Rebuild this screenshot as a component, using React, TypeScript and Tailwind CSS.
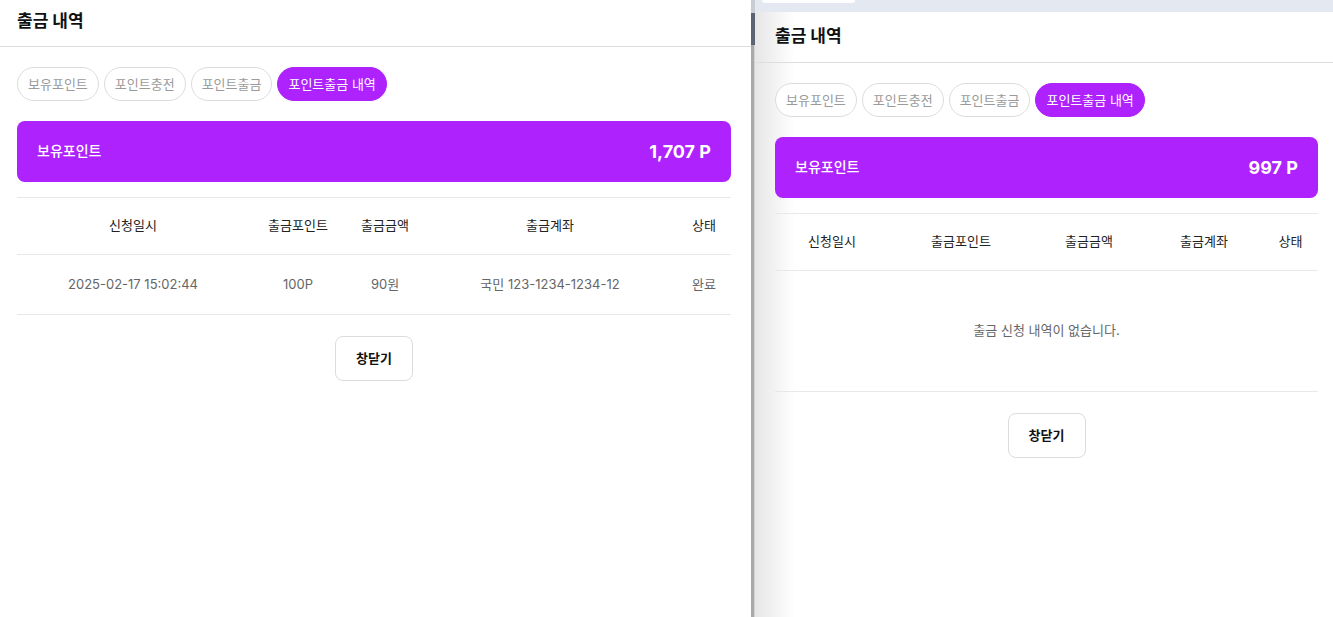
import React from "react";

const FONT = { fontFamily: "Inter, 'Noto Sans CJK KR', 'Noto Sans', sans-serif" };

const TABS = ["보유포인트", "포인트충전", "포인트출금", "포인트출금 내역"];

type Row = { date: string; point: string; amount: string; account: string; status: string };

function Tabs() {
  return (
    <div className="flex gap-[5px]">
      {TABS.map((t, i) => (
        <button
          key={t}
          className={
            i === 3
              ? "h-[34px] px-[10px] rounded-full border border-[#ae22fe] bg-[#ae22fe] text-white text-[13px] leading-none"
              : "h-[34px] px-[10px] rounded-full border border-[#dcdcdc] bg-white text-[#9a9a9a] text-[13px] leading-none"
          }
        >
          {t}
        </button>
      ))}
    </div>
  );
}

function PointCard({ value }: { value: string }) {
  return (
    <div className="mt-[20px] h-[61px] rounded-lg bg-[#ae22fe] px-5 flex items-center justify-between text-white">
      <span className="text-[14px] font-medium -mt-[3px]">보유포인트</span>
      <span className="text-[18px] font-bold">{value}</span>
    </div>
  );
}

function HistoryTable({ cols, rows }: { cols: string[]; rows: Row[] }) {
  const heads = ["신청일시", "출금포인트", "출금금액", "출금계좌", "상태"];
  return (
    <table className="mt-[15px] w-full table-fixed border-t border-[#e8e8e8] text-[13px]">
      <colgroup>
        {cols.map((w, i) => (
          <col key={i} style={{ width: w }} />
        ))}
      </colgroup>
      <thead>
        <tr className="h-[57px] border-b border-[#e8e8e8]">
          {heads.map((h) => (
            <th key={h} className="font-normal text-[#222]">
              {h}
            </th>
          ))}
        </tr>
      </thead>
      <tbody>
        {rows.length === 0 ? (
          <tr className="h-[121px] border-b border-[#e8e8e8]">
            <td colSpan={5} className="text-center text-[#666]">
              출금 신청 내역이 없습니다.
            </td>
          </tr>
        ) : (
          rows.map((r, i) => (
            <tr key={i} className="h-[60px] border-b border-[#e8e8e8] text-center text-[#666]">
              <td>{r.date}</td>
              <td>{r.point}</td>
              <td>{r.amount}</td>
              <td>{r.account}</td>
              <td>{r.status}</td>
            </tr>
          ))
        )}
      </tbody>
    </table>
  );
}

function CloseButton() {
  return (
    <div className="flex justify-center mt-[21px]">
      <button className="w-[78px] h-[45px] rounded-lg border border-[#dcdcdc] bg-white text-[13px] font-bold text-[#111]">
        창닫기
      </button>
    </div>
  );
}

export default function App() {
  return (
    <div className="flex h-screen w-full overflow-hidden bg-white" style={FONT}>
      {/* left panel */}
      <div className="w-[751px] shrink-0">
        <div className="h-[47px] border-b border-[#dedede] px-[17px] flex items-center">
          <h1 className="text-[17px] font-bold text-[#111] -mt-[2px]">출금 내역</h1>
        </div>
        <div className="px-[17px] pt-[20px] w-[748px]">
          <Tabs />
          <PointCard value="1,707 P" />
          <HistoryTable
            cols={["232px", "98px", "76px", "254px", "54px"]}
            rows={[
              {
                date: "2025-02-17 15:02:44",
                point: "100P",
                amount: "90원",
                account: "국민 123-1234-1234-12",
                status: "완료",
              },
            ]}
          />
          <CloseButton />
        </div>
      </div>

      {/* window divider */}
      <div className="w-[4px] shrink-0 flex flex-col">
        <div className="h-[13px] bg-[#c9ccd3]" />
        <div className="h-[32px] bg-[#5c6373]" />
        <div className="flex-1 bg-[#a9a9a9] border-r border-[#d4d4d4]" />
      </div>

      {/* right panel */}
      <div className="flex-1 min-w-0 bg-[linear-gradient(to_right,#e6e6e6,#ffffff_40px)]">
        <div className="h-[12px] bg-[#e4e8f0] pl-[7px]">
          <div className="w-[93px] h-[3px] bg-white rounded-b-lg" />
        </div>
        <div className="h-[51px] border-b border-[#dedede] pl-[20px] flex items-center">
          <h1 className="text-[17px] font-bold text-[#111]">출금 내역</h1>
        </div>
        <div className="pl-[20px] pt-[20px] w-[563px]">
          <Tabs />
          <PointCard value="997 P" />
          <HistoryTable cols={["114px", "144px", "112px", "118px", "55px"]} rows={[]} />
          <CloseButton />
        </div>
      </div>
    </div>
  );
}
